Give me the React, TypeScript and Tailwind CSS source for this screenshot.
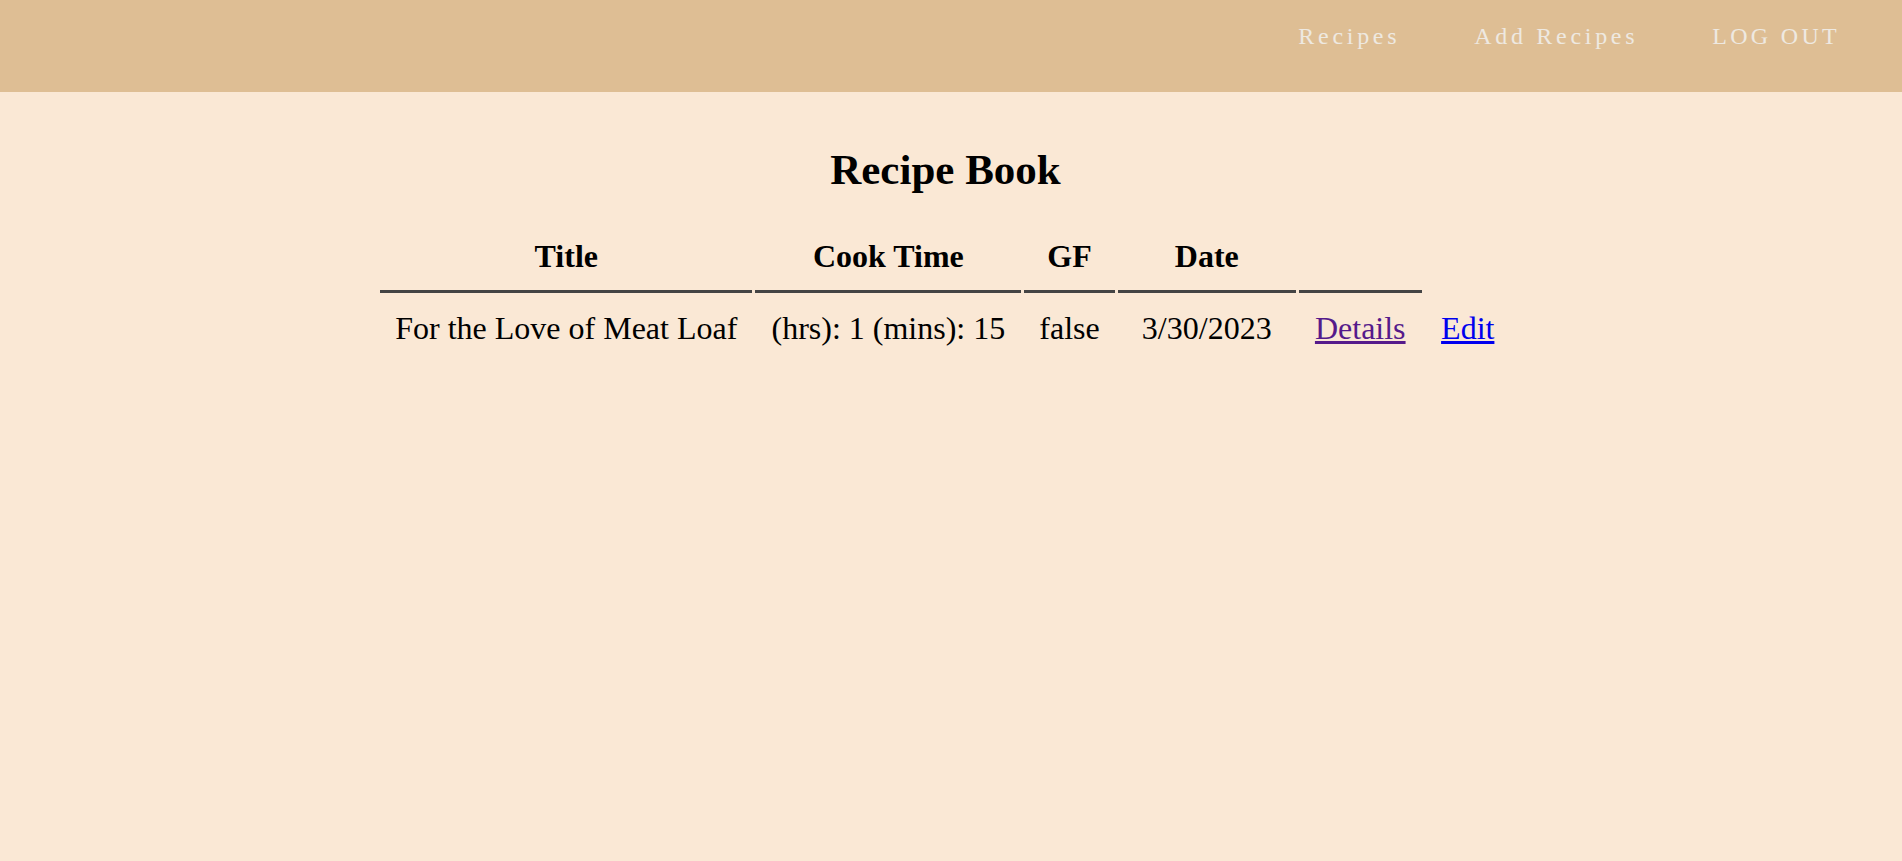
import React from "react";

const serif = "font-['Liberation_Serif','Times_New_Roman',serif]";

export default function App() {
  return (
    <div className={`min-h-[861px] w-full bg-[#fae8d5] text-black ${serif}`}>
      <header className="h-[92px] bg-[#debe94] flex justify-end items-start pt-[22px] pr-[62px] gap-[74px]">
        <a className="text-[24px] leading-[28px] tracking-[3.7px] text-[#eee9e1]" href="#">Recipes</a>
        <a className="text-[24px] leading-[28px] tracking-[3.7px] text-[#eee9e1]" href="#">Add Recipes</a>
        <a className="text-[24px] leading-[28px] tracking-[3.3px] text-[#eee9e1]" href="#">LOG OUT</a>
      </header>
      <main className="flex flex-col items-center pr-[11px]">
        <h1 className="mt-[54px] text-[43px] leading-[48px] font-bold">Recipe Book</h1>
        <table className="mt-[25px] border-separate border-spacing-[3px] table-fixed">
          <thead>
            <tr>
              <th className="w-[370px] px-[15px] pt-[15px] pb-[15px] text-[32px] leading-[38px] font-bold border-b-[3px] border-[#444]">Title</th>
              <th className="w-[266px] px-[15px] pt-[15px] pb-[15px] text-[32px] leading-[38px] font-bold border-b-[3px] border-[#444]">Cook Time</th>
              <th className="w-[90px] px-[15px] pt-[15px] pb-[15px] text-[32px] leading-[38px] font-bold border-b-[3px] border-[#444]">GF</th>
              <th className="w-[178px] px-[15px] pt-[15px] pb-[15px] text-[32px] leading-[38px] font-bold border-b-[3px] border-[#444]">Date</th>
              <th className="w-[123px] px-[15px] pt-[15px] pb-[15px] border-b-[3px] border-[#444]"></th>
            </tr>
          </thead>
          <tbody>
            <tr className="text-[32px] leading-[38px]">
              <td className="px-[15px] pt-[13px] pb-[15px] text-center whitespace-nowrap">For the Love of Meat Loaf</td>
              <td className="px-[15px] pt-[13px] pb-[15px] text-center whitespace-nowrap">(hrs): 1 (mins): 15</td>
              <td className="px-[15px] pt-[13px] pb-[15px] text-center whitespace-nowrap">false</td>
              <td className="px-[15px] pt-[13px] pb-[15px] text-center whitespace-nowrap">3/30/2023</td>
              <td className="px-[15px] pt-[13px] pb-[15px] text-center whitespace-nowrap">
                <a href="#" className="underline text-[#551a8b]">Details</a>
              </td>
              <td className="w-[86px] px-[15px] pt-[13px] pb-[15px] text-center whitespace-nowrap">
                <a href="#" className="underline text-[#0000ee]">Edit</a>
              </td>
            </tr>
          </tbody>
        </table>
      </main>
    </div>
  );
}
